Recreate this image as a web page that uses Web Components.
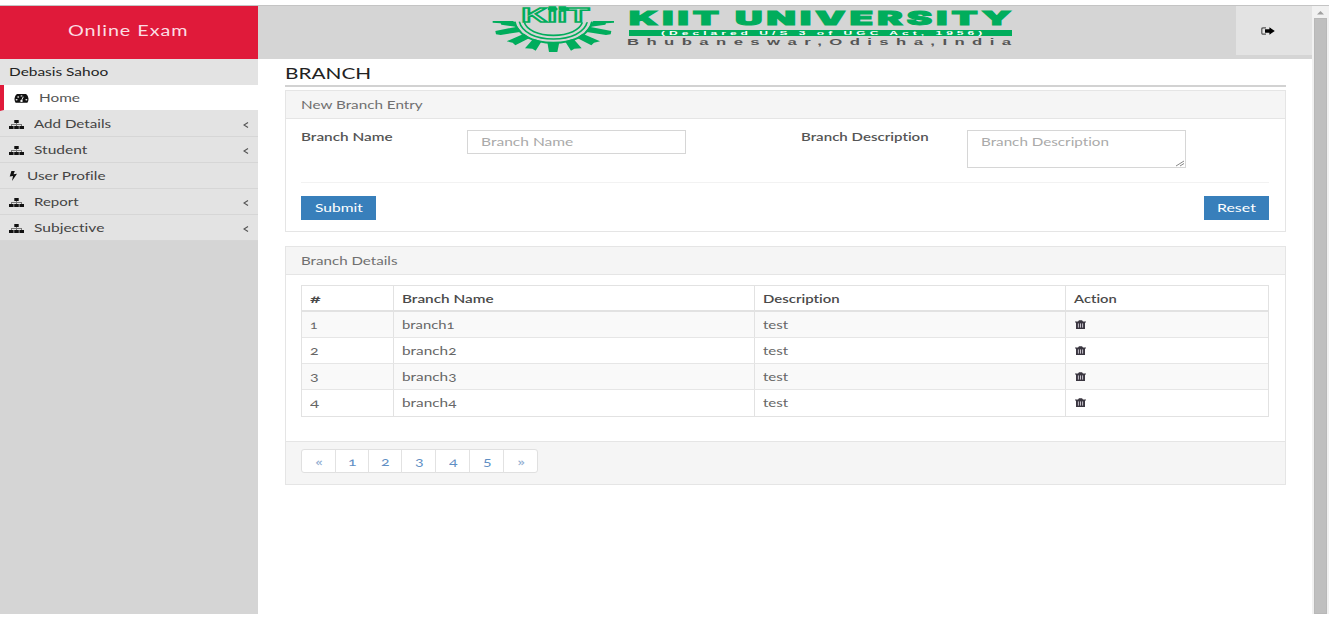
<!DOCTYPE html>
<html lang="en">
<head>
<meta charset="utf-8">
<title>Online Exam</title>
<style>
html,body{margin:0;height:100%;overflow:hidden;background:#fff}
body{font-family:Lato,"Open Sans",sans-serif;font-size:12px;color:#666;font-variant-ligatures:none}
</style>
</head>
<body>
<exam-app></exam-app>
<script>
/* Text stretched horizontally to a given width */
class FitText extends HTMLElement{
  connectedCallback(){
    if(this.shadowRoot)return;
    const w=+this.getAttribute('w'),ls=+(this.getAttribute('ls')||0);
    this.attachShadow({mode:'open'}).innerHTML=`<style>
      :host{display:inline-block;width:${w}px;white-space:nowrap;flex:none;text-align:left}
      span{display:inline-block;transform-origin:0 50%;letter-spacing:${ls}px}
    </style><span><slot></slot></span>`;
    const s=this.shadowRoot.querySelector('span');
    requestAnimationFrame(()=>this.fit());
    this.fit=()=>{const n=s.offsetWidth-ls;if(n>0)s.style.transform=`scaleX(${w/n})`};
    this.fit();
  }
}
customElements.define('fit-text',FitText);

const ICONS={
  dash:[15,9,'<path fill="#111" d="M1.6 8.8A7 6.8 0 1 1 13.4 8.8Z"/><g fill="#eee"><ellipse cx="2.6" cy="5.8" rx="1" ry=".8"/><ellipse cx="4.2" cy="3" rx="1" ry=".8"/><ellipse cx="7.5" cy="1.9" rx="1" ry=".7"/><ellipse cx="12.4" cy="5.8" rx="1" ry=".8"/></g><path stroke="#fff" stroke-width=".9" d="M7.5 6.5 9.3 2.800"/><ellipse cx="7.5" cy="7" rx="1.3" ry="1" fill="#fff"/>'],
  tree:[15,9,'<path fill="#777" d="M7 2h1v2h5v3h-1V5H8v2H7V5H3v2H2V4h5z"/><path fill="#111" d="M5.300 0h4.400v3H5.300zM0 6h4.600v3H0zM5.200 6h4.600v3H5.200zM10.400 6H15v3h-4.600z"/>'],
  bolt:[8,10,'<path fill="#111" d="M2.4 0h3.4L4.6 3.2 8 2.7 3 10 4 5 .7 5.6z"/>'],
  out:[14,8,'<path fill="none" stroke="#555" stroke-width="1.2" d="M5 .8H2.4Q.8.8.8 2v4q0 1.2 1.6 1.2H5"/><path fill="#000" d="M4 2.2h4.400V.3L13.800 4 8.400 7.700V5.800H4z"/>'],
  trash:[11,9,'<path fill="#3a3640" d="M0 1.400h3L4 .2h3l1 1.200h3v1.200H10V9H1V2.600H0z"/><path stroke="#d8d4dc" stroke-width=".9" d="M3.400 3.400v4.200M5.500 3.400v4.200M7.600 3.400v4.200"/>']
};
class ExamIcon extends HTMLElement{
  connectedCallback(){
    if(this.shadowRoot)return;
    const [w,h,p]=ICONS[this.getAttribute('name')];
    this.attachShadow({mode:'open'}).innerHTML=`<style>:host{display:block;flex:none;width:${w}px;height:${h}px}svg{display:block}</style><svg width="${w}" height="${h}" viewBox="0 0 ${w} ${h}">${p}</svg>`;
  }
}
customElements.define('exam-icon',ExamIcon);

class NavItem extends HTMLElement{
  connectedCallback(){
    if(this.shadowRoot)return;
    const a=n=>this.getAttribute(n);
    const act=this.hasAttribute('active');
    this.attachShadow({mode:'open'}).innerHTML=`<style>
      :host{display:flex;box-sizing:border-box;height:26px;align-items:center;padding:0 9px 0 ${act?10:9}px;border-bottom:1px solid #d6d6d6;background:#e3e3e3;color:#444;font-size:12px;line-height:25px}
      :host([active]){background:#fff;border-left:4px solid #e01a3a;border-bottom-color:#e3e3e3;color:#555}
      .i{width:${act?25:a('icon')==='bolt'?18:25}px;padding-top:1px}
      .c{margin-left:auto}
      svg{display:block;padding-top:2px}
    </style><div class="i"><exam-icon name="${a('icon')}"></exam-icon></div><fit-text w="${a('w')}">${a('label')}</fit-text>
    ${this.hasAttribute('sub')?'<div class="c"><svg width="6" height="8" viewBox="0 0 6 8"><path d="M5 1.500 1 4l4 2.500" fill="none" stroke="#555" stroke-width="1.200"/></svg></div>':''}`;
  }
}
customElements.define('nav-item',NavItem);

class KiitLogo extends HTMLElement{
  connectedCallback(){
    if(this.shadowRoot)return;
    const half='<path d="M38 63 100 63Q104 73 114 82L97 79 64 74 62 70 38 68ZM46 93 112 80 125 95 62 105 48 103ZM80 124 132 101 150 113 106 136 98 128ZM135 145 160 116 185 124 167 152 157 146Z"/>';
    this.attachShadow({mode:'open'}).innerHTML=`<style>
      :host{display:flex}
      svg{display:block;flex:none;overflow:visible}
      .t{margin-left:13px;width:383px;display:flex;flex-direction:column}
      .n{display:flex;justify-content:space-between;height:19px;padding-top:3px;width:382px;font:900 18.500px/19px Inter,sans-serif;color:#00ad5c;-webkit-text-stroke:1px #00ad5c}
      .b{margin-top:2px;height:6px;background:#00ad5c;color:#fff;font:bold 6px/6.500px "Liberation Sans",sans-serif;padding-left:32px}
      .c{font:bold 9px/11px "Liberation Sans",sans-serif;color:#555;margin:1px 0 0 -2px}
      .b fit-text,.c fit-text{display:block}
    </style>
    <svg width="126" height="47" viewBox="30 18 378 141" fill="#00ad5c">
      ${half}<g transform="translate(440 0) scale(-1 1)">${half}</g>
      <path d="M207 156 202 127H238L232 156Z"/>
      <g fill="none" stroke="#00ad5c">
        <path stroke-width="6" d="M104 65C112 106 160 128 220 128S328 106 336 65"/>
        <path stroke-width="5" d="M118 65C126 98 168 117 220 117S314 98 322 65"/>
        <path stroke-width="5" d="M133 67C140 90 174 106 220 106S300 90 307 67"/>
      </g>
      <path fill="#d5d5d5" d="M122 20H330V67H122Z"/>
      <text x="124" y="66" textLength="204" lengthAdjust="spacingAndGlyphs" font-family="Liberation Sans" font-weight="bold" font-size="61" fill="#d5d5d5" stroke="#00ad5c" stroke-width="4.500">KiiT</text>
      <ellipse cx="218" cy="27" rx="15" ry="6"/><ellipse cx="252" cy="27" rx="15" ry="6"/>
    </svg>
    <div class="t">
      <div class="n"><fit-text w="91" ls="2">KIIT</fit-text><fit-text w="276" ls="2">UNIVERSITY</fit-text></div>
      <div class="b"><fit-text w="321" ls="2">(Declared U/S 3 of UGC Act, 1956)</fit-text></div>
      <div class="c"><fit-text w="384" ls="4">Bhubaneswar,Odisha,India</fit-text></div>
    </div>`;
  }
}
customElements.define('kiit-logo',KiitLogo);

class ExamPanel extends HTMLElement{
  connectedCallback(){
    if(this.shadowRoot)return;
    this.attachShadow({mode:'open'}).innerHTML=`<style>
      :host{display:flex;flex-direction:column;box-sizing:border-box;border:1px solid #e5e5e5;background:#fff}
      .h{height:27px;line-height:27px;background:#f5f5f5;border-bottom:1px solid #e5e5e5;padding-left:15px;color:#707070}
      .b{flex:1;padding:0 16px 0 15px}
    </style><div class="h"><fit-text w="${this.getAttribute('w')}">${this.getAttribute('heading')}</fit-text></div><div class="b"><slot></slot></div><slot name="footer"></slot>`;
  }
}
customElements.define('exam-panel',ExamPanel);

class BranchForm extends HTMLElement{
  connectedCallback(){
    if(this.shadowRoot)return;
    this.attachShadow({mode:'open'}).innerHTML=`<style>
      :host{display:block}
      .r{display:grid;grid-template-columns:166px 219px 115px 166px 219px;height:64px;padding-top:11px;box-sizing:border-box;align-items:start;border-bottom:1px solid #f2f2f2}
      .l{line-height:13px;font-weight:600;color:#555}
      .f{box-sizing:border-box;border:1px solid #d6d6d6;height:24px;line-height:22px;padding-left:13px;color:#aaa;background:#fff}
      .a{height:38px;display:flex;align-items:flex-start;justify-content:space-between}
      .a svg{align-self:flex-end}
      .k{display:flex;justify-content:space-between;padding-top:13px}
      .p{height:24px;line-height:24px;background:#387fbb;color:#fff;padding:0 13.500px}
    </style>
    <div class="r"><div class="l"><fit-text w="92">Branch Name</fit-text></div><div class="f"><fit-text w="92">Branch Name</fit-text></div><i></i>
    <div class="l"><fit-text w="128">Branch Description</fit-text></div>
    <div class="f a"><fit-text w="128">Branch Description</fit-text><svg width="9" height="7"><path d="M0 6 8 1M4 6 8 3.500" stroke="#888"/></svg></div></div>
    <div class="k"><div class="p"><fit-text w="48">Submit</fit-text></div><div class="p"><fit-text w="38.500">Reset</fit-text></div></div>`;
  }
}
customElements.define('branch-form',BranchForm);

class BranchTable extends HTMLElement{
  connectedCallback(){
    if(this.shadowRoot)return;
    const wd=[7,8,8,8.5];
    this.attachShadow({mode:'open'}).innerHTML=`<style>
      :host{display:block;padding-top:10px}
      .t{border:1px solid #e2e2e2;box-sizing:border-box;width:968px}
      .r{display:grid;grid-template-columns:92px 361px 311px 1fr;height:26px;box-sizing:border-box;border-bottom:1px solid #e6e6e6;line-height:25px}
      .r:nth-child(even){background:#f9f9f9}
      .r:first-child{border-bottom:2px solid #e2e2e2;font-weight:600;color:#4a4a4a}
      .r:last-child{border-bottom:0}
      .r>div{padding-left:8px;border-right:1px solid #e2e2e2;font-feature-settings:"onum"}
      .r>div:last-child{border:0}
      exam-icon{margin-top:8px;margin-left:1px}
    </style><div class="t"><div class="r"><div><fit-text w="10">#</fit-text></div><div><fit-text w="92">Branch Name</fit-text></div><div><fit-text w="76">Description</fit-text></div><div><fit-text w="43">Action</fit-text></div></div>
    ${[1,2,3,4].map((n,i)=>`<div class="r"><div><fit-text w="${wd[i]}">${n}</fit-text></div><div><fit-text w="${i?55:53}">branch${n}</fit-text></div><div><fit-text w="25">test</fit-text></div><div><exam-icon name="trash"></exam-icon></div></div>`).join('')}</div>`;
  }
}
customElements.define('branch-table',BranchTable);

class PageNav extends HTMLElement{
  connectedCallback(){
    if(this.shadowRoot)return;
    this.attachShadow({mode:'open'}).innerHTML=`<style>
      :host{display:block;box-sizing:border-box;height:43px;background:#f5f5f5;border-top:1px solid #e5e5e5;padding:7px 0 0 15px}
      .p{display:inline-grid;grid-template-columns:34px 33px 33px 34px 34px 34px 33px;height:24px;box-sizing:border-box;border:1px solid #e0e0e0;border-radius:3px;background:#fff;color:#5f8fc4;line-height:23px;text-align:center;font-feature-settings:"onum"}
      .p>div{border-right:1px solid #e2e2e2}.p>div:last-child{border:0}
      .p>div:first-child,.p>div:last-child{color:#8eacd0}
    </style><div class="p">${['«','1','2','3','4','5','»'].map(c=>`<div><fit-text w="8">${c}</fit-text></div>`).join('')}</div>`;
  }
}
customElements.define('page-nav',PageNav);

class ExamApp extends HTMLElement{
  connectedCallback(){
    this.attachShadow({mode:'open'}).innerHTML=`<style>
      :host{display:grid;box-sizing:border-box;width:1334px;height:618px;padding:5px 5px 4px 0;grid-template-columns:1312px 17px;grid-template-rows:1px 608px;background:#fff}
      .top{grid-column:1/3;background:#c4c4c4}
      .main{display:grid;grid-template-columns:258px 1fr;grid-template-rows:53px 1fr}
      .brand{background:#e01a3a;color:#fbdde2;display:flex;align-items:center;justify-content:center;font-size:14.500px;padding:0 4px 5px 0;box-sizing:border-box}
      .head{background:#d5d5d5;display:flex;justify-content:space-between}
      kiit-logo{margin-left:232px}
      .out{width:76px;height:49px;background:#e3e3e3;display:flex;align-items:center;justify-content:center}
      .out exam-icon{margin-left:-12px}
      .side{background:#d5d5d5}
      .user{height:26px;line-height:25px;background:#e3e3e3;padding-left:9px;color:#222}
      .content{padding:3px 26px 0 27px;display:flex;flex-direction:column}
      .title{height:23px;line-height:23px;font-size:14.500px;color:#222;border-bottom:2px solid #d2d2d2}
      .one{height:142px;margin-top:3px}.two{height:239px;margin-top:14px}
      .bar{background:#f1f1f1;display:flex;flex-direction:column;align-items:center}
      .bar svg{flex:none}
      .thumb{flex:1;width:13px;background:#bfbfbf;box-shadow:inset 0 0 0 1px #b8b8b8}
    </style>
    <div class="top"></div>
    <div class="main">
      <div class="brand"><fit-text w="119" ls=".7">Online Exam</fit-text></div>
      <div class="head"><kiit-logo></kiit-logo><div class="out"><exam-icon name="out"></exam-icon></div></div>
      <div class="side"><div class="user"><fit-text w="99">Debasis Sahoo</fit-text></div>
        <nav-item active icon="dash" w="41" label="Home"></nav-item>
        <nav-item sub icon="tree" w="77" label="Add Details"></nav-item>
        <nav-item sub icon="tree" w="53" label="Student"></nav-item>
        <nav-item icon="bolt" w="78" label="User Profile"></nav-item>
        <nav-item sub icon="tree" w="45" label="Report"></nav-item>
        <nav-item sub icon="tree" w="70" label="Subjective"></nav-item></div>
      <div class="content">
        <div class="title"><fit-text w="86">BRANCH</fit-text></div>
        <exam-panel class="one" heading="New Branch Entry" w="122"><branch-form></branch-form></exam-panel>
        <exam-panel class="two" heading="Branch Details" w="97"><branch-table></branch-table><page-nav slot="footer"></page-nav></exam-panel>
      </div>
    </div>
    <div class="bar"><svg width="13" height="12"><path d="M3 8.500 6.500 5 10 8.500Z" fill="#a0a0a0"/></svg><div class="thumb"></div></div>`;
  }
}
customElements.define('exam-app',ExamApp);
</script>
</body>
</html>
